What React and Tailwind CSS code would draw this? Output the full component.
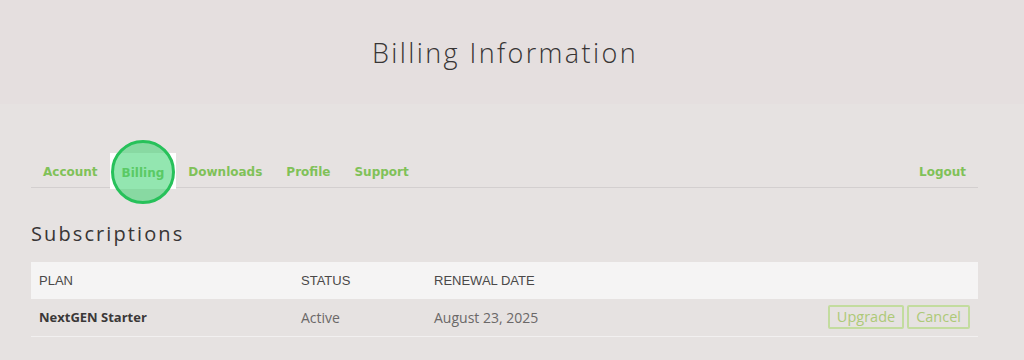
import React from "react";

const tabs = ["Account", "Billing", "Downloads", "Profile", "Support"];
const tabFont = { fontFamily: '"DejaVu Sans", "Open Sans", sans-serif' };

export default function App() {
  return (
    <div className="w-[1024px] h-[360px] bg-[#e6e2e1] overflow-hidden" style={{ fontFamily: '"Open Sans", "Liberation Sans", sans-serif' }}>
      <header className="h-[104px] bg-[#e5dfdf] flex items-center justify-center pr-[14px]">
        <h1 className="text-[27px] font-light tracking-[2.4px] text-[#383535] pt-[3px]">Billing Information</h1>
      </header>
      <main className="pl-[31px] pr-[46px] pt-[49px]">
        <nav className="relative flex items-stretch border-b border-[#d3cfcf] h-[35px]">
          {tabs.map((t) => (
            <div
              key={t}
              className={`relative flex items-center pt-[3px] text-[12px] font-bold text-[#80c158] ${t === "Billing" ? "bg-white -mb-[2px] pl-[12px] pr-[12px]" : "px-[12px]"}`}
              style={tabFont}
            >
              {t}
              {t === "Billing" && (
                <span className="absolute left-1/2 top-[calc(50%+1px)] -translate-x-1/2 -translate-y-1/2 w-[64px] h-[64px] rounded-full border-[3px] border-[#27c15a] bg-[#3bd16f]/55" />
              )}
            </div>
          ))}
          <div className="ml-auto flex items-center pt-[3px] pr-[12px] text-[12px] font-bold text-[#80c158]" style={tabFont}>
            Logout
          </div>
        </nav>
        <h2 className="mt-[34px] text-[20px] tracking-[2.1px] text-[#383535] leading-[24px]">Subscriptions</h2>
        <table className="mt-[16px] w-full text-[13px] border-collapse">
          <thead>
            <tr className="bg-[#f5f4f4] h-[37px] text-[#4a4848]" style={{ fontFamily: '"Liberation Sans", sans-serif' }}>
              <th className="text-left font-normal pl-[8px] w-[270px]">PLAN</th>
              <th className="text-left font-normal w-[133px]">STATUS</th>
              <th className="text-left font-normal">RENEWAL DATE</th>
              <th></th>
            </tr>
          </thead>
          <tbody>
            <tr className="h-[37px] border-b border-[#f2f0f0]">
              <td className="pl-[8px] font-bold text-[#3b3838]">NextGEN Starter</td>
              <td className="text-[14px] text-[#6b6868]">Active</td>
              <td className="text-[14px] text-[#6b6868]">August 23, 2025</td>
              <td className="text-right pr-[8px]">
                <div className="inline-flex gap-[3px] align-middle">
                  <button className="h-[24px] px-[7px] border-2 border-[#c3dc9f] rounded-[2px] text-[14.5px] leading-none text-[#adc977]">Upgrade</button>
                  <button className="h-[24px] px-[7px] border-2 border-[#c3dc9f] rounded-[2px] text-[14.5px] leading-none text-[#adc977]">Cancel</button>
                </div>
              </td>
            </tr>
          </tbody>
        </table>
      </main>
    </div>
  );
}
